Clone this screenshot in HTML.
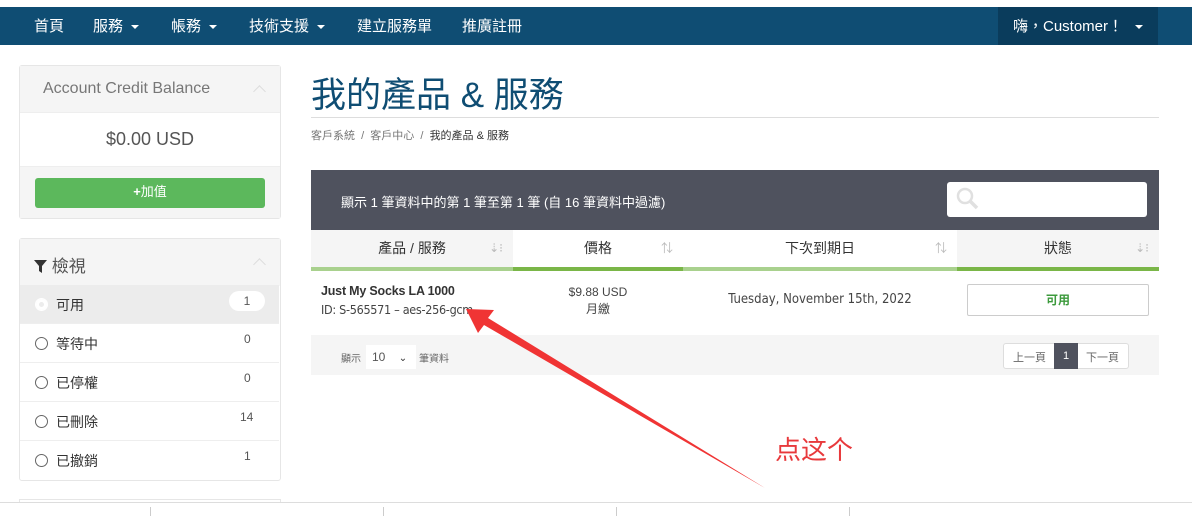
<!DOCTYPE html>
<html><head><meta charset="utf-8"><style>
*{box-sizing:border-box;margin:0;padding:0}
body{width:1192px;height:516px;overflow:hidden;background:#fff;font-family:"Liberation Sans","Noto Sans CJK TC",sans-serif;color:#333;position:relative}
.abs{position:absolute}
.nav{left:0;top:7px;width:1192px;height:38px;background:#0f4d73}
.nav span{position:absolute;top:8px;color:#fff;font-size:15px}
.car{display:inline-block;width:0;height:0;border-left:4px solid transparent;border-right:4px solid transparent;border-top:4px solid #fff;vertical-align:middle;margin-left:8px}
.user{left:998px;top:7px;width:160px;height:38px;background:#0a3c5c}
.panel{border:1px solid #e6e6e6;border-radius:3px;background:#fff}
.ph{background:#f5f5f5}
.chev{position:absolute;width:9px;height:9px;border-left:1.5px solid #ddd;border-top:1.5px solid #ddd;transform:rotate(45deg)}
.row{position:absolute;left:20px;width:259px;height:39px;border-top:1px solid #eee;font-size:14px}
.row .rad{position:absolute;left:15px;top:13px;width:13px;height:13px;border:1.5px solid #666;border-radius:50%}
.row .t{position:absolute;left:36px;top:10px}
.row .n{position:absolute;left:224px;top:8px;font-size:12px;color:#555}
.th{position:absolute;top:230px;height:37px;font-size:14px;text-align:center;line-height:37px;color:#333}
.si{position:absolute;right:10px;top:0;color:#bbb;font-size:12px}
</style></head><body>
<div class="abs nav">
<span style="left:34px">首頁</span>
<span style="left:93px">服務<i class="car"></i></span>
<span style="left:171px">帳務<i class="car"></i></span>
<span style="left:249px">技術支援<i class="car"></i></span>
<span style="left:357px">建立服務單</span>
<span style="left:462px">推廣註冊</span>
</div>
<div class="abs user"><span style="position:absolute;left:15px;top:8px;color:#fff;font-size:15px">嗨，Customer！<i class="car" style="margin-left:12px"></i></span></div>

<div class="abs panel" style="left:19px;top:65px;width:262px;height:154px">
<div class="ph" style="height:46px;position:relative"><div style="position:absolute;left:23px;top:14px;font-size:16px;color:#777">Account Credit Balance</div><div class="chev" style="left:235px;top:21px"></div></div>
<div style="height:54px;text-align:center;font-size:18px;line-height:52px;color:#555;border-top:1px solid #eee">$0.00 USD</div>
<div class="ph" style="height:52px;position:relative;border-top:1px solid #eee"><div style="position:absolute;left:15px;top:11px;width:230px;height:30px;background:#5cb85c;border-radius:3px;color:#fff;text-align:center;line-height:27px;font-size:13px"><b>+</b>加值</div></div>
</div>

<div class="abs panel" style="left:19px;top:238px;width:262px;height:243px">
<div class="ph" style="height:47px;position:relative"><div style="position:absolute;left:14px;top:13px;font-size:17px;color:#555"><svg width="13" height="13" viewBox="0 0 13 13" style="vertical-align:-1px"><path d="M0 0H13L8 6V13L5 11V6Z" fill="#333"/></svg> 檢視</div><div class="chev" style="left:235px;top:21px"></div></div>
</div>
<div class="row" style="top:285px;background:#ececec;border:none;height:38px"><div class="rad" style="border-color:#fff;background:#ececec;box-shadow:inset 0 0 0 3px #fff"></div><div class="t">可用</div><div style="position:absolute;left:209px;top:6px;width:36px;height:20px;background:#fff;border-radius:10px;text-align:center;font-size:12px;line-height:20px;color:#555">1</div></div>
<div class="row" style="top:323px"><div class="rad"></div><div class="t">等待中</div><div class="n">0</div></div>
<div class="row" style="top:362px"><div class="rad"></div><div class="t">已停權</div><div class="n">0</div></div>
<div class="row" style="top:401px"><div class="rad"></div><div class="t">已刪除</div><div class="n" style="left:220px">14</div></div>
<div class="row" style="top:440px"><div class="rad"></div><div class="t">已撤銷</div><div class="n">1</div></div>
<div class="abs" style="left:19px;top:499px;width:262px;height:4px;border:1px solid #e6e6e6;border-bottom:none"></div>

<div class="abs" style="left:311px;top:67px;font-size:35px;color:#0f4d73">我的產品 &amp; 服務</div>
<div class="abs" style="left:311px;top:117px;width:848px;height:1px;background:#ddd"></div>
<div class="abs" style="left:311px;top:127px;font-size:11px;color:#777">客戶系統 &nbsp;/&nbsp; 客戶中心 &nbsp;/&nbsp; <span style="color:#333">我的產品 &amp; 服務</span></div>

<div class="abs" style="left:311px;top:170px;width:848px;height:60px;background:#4f525e"></div>
<div class="abs" style="left:341px;top:192px;font-size:13px;color:#fff">顯示 1 筆資料中的第 1 筆至第 1 筆 (自 16 筆資料中過濾)</div>
<div class="abs" style="left:947px;top:182px;width:200px;height:35px;background:#fff;border-radius:3px"><svg width="26" height="26" viewBox="0 0 26 26" style="position:absolute;left:8px;top:4px"><circle cx="10" cy="10" r="7" fill="none" stroke="#e0e0e0" stroke-width="2.5"/><path d="M15 15L22 22" stroke="#e0e0e0" stroke-width="3.5"/></svg></div>

<div class="th" style="left:311px;width:202px;background:#f5f5f5">產品 / 服務<span class="si">⇣⁝</span></div>
<div class="th" style="left:513px;width:170px">價格<span class="si">⇅</span></div>
<div class="th" style="left:683px;width:274px">下次到期日<span class="si">⇅</span></div>
<div class="th" style="left:957px;width:202px;background:#f5f5f5">狀態<span class="si">⇣⁝</span></div>
<div class="abs" style="left:311px;top:267px;width:848px;height:4px;background:#7ab648"></div>
<div class="abs" style="left:311px;top:267px;width:202px;height:4px;background:#a9d18e"></div>
<div class="abs" style="left:683px;top:267px;width:274px;height:4px;background:#a9d18e"></div>

<div class="abs" style="left:321px;top:284px;font-size:12.5px;color:#333;font-weight:bold;font-family:'Liberation Sans Narrow','Liberation Sans',sans-serif;letter-spacing:-0.2px">Just My Socks LA 1000</div>
<div class="abs" style="left:321px;top:302px;font-size:12.5px;color:#444;font-family:'DejaVu Sans Condensed','Liberation Sans',sans-serif;letter-spacing:-0.3px">ID: S-565571 – aes-256-gcm</div>
<div class="abs" style="left:513px;top:284px;width:170px;text-align:center;font-size:12px;color:#444;line-height:17px">$9.88 USD<br>月繳</div>
<div class="abs" style="left:683px;top:292px;width:274px;text-align:center;font-size:13px;color:#444;font-family:'DejaVu Sans Condensed','Liberation Sans',sans-serif">Tuesday, November 15th, 2022</div>
<div class="abs" style="left:967px;top:284px;width:182px;height:32px;border:1px solid #ccc;border-radius:2px;text-align:center;line-height:30px;font-size:12px;color:#3c9a3c;font-weight:bold">可用</div>

<div class="abs" style="left:311px;top:335px;width:848px;height:40px;background:#f5f5f5"></div>
<div class="abs" style="left:341px;top:350px;font-size:10px;color:#666">顯示</div>
<div class="abs" style="left:366px;top:345px;width:50px;height:24px;background:#fff;font-size:12px;color:#555;line-height:24px;padding-left:6px">10 <span style="margin-left:10px;font-size:10px;color:#333">⌄</span></div>
<div class="abs" style="left:419px;top:350px;font-size:10px;color:#666">筆資料</div>
<div class="abs" style="left:1003px;top:343px;width:126px;height:26px;border:1px solid #ddd;border-radius:3px;background:#fff;font-size:11px;color:#666">
<span style="position:absolute;left:9px;top:5px">上一頁</span>
<span style="position:absolute;left:50px;top:-1px;width:24px;height:26px;background:#4f525e;color:#fff;text-align:center;line-height:26px">1</span>
<span style="position:absolute;left:82px;top:5px">下一頁</span></div>

<svg class="abs" style="left:0;top:0" width="1192" height="516">
<path d="M765 488 L484 325 L478 333 L466 309 L494 310 L488 318 Z" fill="#f03434"/>
<line x1="0" y1="502.5" x2="1192" y2="502.5" stroke="#ddd"/>
<path d="M150.5 507V516M383.5 507V516M616.5 507V516M849.5 507V516" stroke="#ccc"/>
</svg>
<div class="abs" style="left:775px;top:430px;font-size:26px;color:#e8393c;font-family:'Noto Sans CJK SC',sans-serif">点这个</div>
</body></html>
